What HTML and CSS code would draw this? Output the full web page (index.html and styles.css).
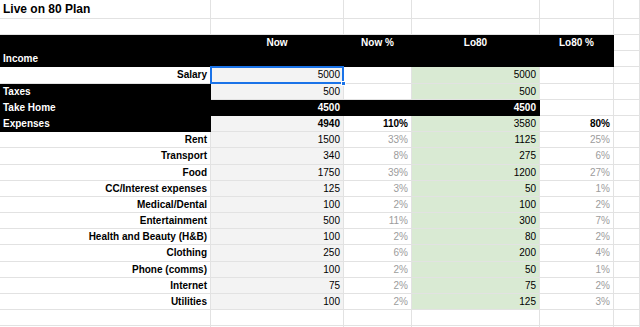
FILE: index.html
```html
<!DOCTYPE html>
<html>
<head>
<meta charset="utf-8">
<link rel="stylesheet" href="styles.css">
</head>
<body>
<div class="sheet">
  <div class="c title">Live on 80 Plan</div><div class="c"></div><div class="c"></div><div class="c"></div><div class="c"></div><div class="c"></div>
  <div class="c"></div><div class="c"></div><div class="c"></div><div class="c"></div><div class="c"></div><div class="c"></div>

  <div class="c blk"></div><div class="c blk ctr">Now</div><div class="c blk ctr">Now %</div><div class="c blk ctr">Lo80</div><div class="c blk ctr">Lo80 %</div><div class="c"></div>
  <div class="c blk">Income</div><div class="c blk"></div><div class="c blk"></div><div class="c blk"></div><div class="c blk"></div><div class="c"></div>

  <div class="c lbl">Salary</div><div class="c g num sel">5000</div><div class="c"></div><div class="c gr num">5000</div><div class="c"></div><div class="c"></div>
  <div class="c blk">Taxes</div><div class="c g num">500</div><div class="c"></div><div class="c gr num">500</div><div class="c"></div><div class="c"></div>
  <div class="c blk">Take Home</div><div class="c blk num">4500</div><div class="c blk"></div><div class="c blk num">4500</div><div class="c"></div><div class="c"></div>
  <div class="c blk">Expenses</div><div class="c g num b">4940</div><div class="c num b">110%</div><div class="c gr num">3580</div><div class="c num b">80%</div><div class="c"></div>

  <div class="c lbl">Rent</div><div class="c g num">1500</div><div class="c num pct">33%</div><div class="c gr num">1125</div><div class="c num pct">25%</div><div class="c"></div>
  <div class="c lbl">Transport</div><div class="c g num">340</div><div class="c num pct">8%</div><div class="c gr num">275</div><div class="c num pct">6%</div><div class="c"></div>
  <div class="c lbl">Food</div><div class="c g num">1750</div><div class="c num pct">39%</div><div class="c gr num">1200</div><div class="c num pct">27%</div><div class="c"></div>
  <div class="c lbl">CC/Interest expenses</div><div class="c g num">125</div><div class="c num pct">3%</div><div class="c gr num">50</div><div class="c num pct">1%</div><div class="c"></div>
  <div class="c lbl">Medical/Dental</div><div class="c g num">100</div><div class="c num pct">2%</div><div class="c gr num">100</div><div class="c num pct">2%</div><div class="c"></div>
  <div class="c lbl">Entertainment</div><div class="c g num">500</div><div class="c num pct">11%</div><div class="c gr num">300</div><div class="c num pct">7%</div><div class="c"></div>
  <div class="c lbl">Health and Beauty (H&amp;B)</div><div class="c g num">100</div><div class="c num pct">2%</div><div class="c gr num">80</div><div class="c num pct">2%</div><div class="c"></div>
  <div class="c lbl">Clothing</div><div class="c g num">250</div><div class="c num pct">6%</div><div class="c gr num">200</div><div class="c num pct">4%</div><div class="c"></div>
  <div class="c lbl">Phone (comms)</div><div class="c g num">100</div><div class="c num pct">2%</div><div class="c gr num">50</div><div class="c num pct">1%</div><div class="c"></div>
  <div class="c lbl">Internet</div><div class="c g num">75</div><div class="c num pct">2%</div><div class="c gr num">75</div><div class="c num pct">2%</div><div class="c"></div>
  <div class="c lbl">Utilities</div><div class="c g num">100</div><div class="c num pct">2%</div><div class="c gr num">125</div><div class="c num pct">3%</div><div class="c"></div>

  <div class="c"></div><div class="c"></div><div class="c"></div><div class="c"></div><div class="c"></div><div class="c"></div>
  <div class="c"></div><div class="c"></div><div class="c"></div><div class="c"></div><div class="c"></div><div class="c"></div>
</div>
</body>
</html>
```

FILE: styles.css
```css
html, body {
  margin: 0;
  padding: 0;
  background: #ffffff;
  overflow: hidden;
}

.sheet {
  display: grid;
  grid-template-columns: 211px 133px 68px 128px 74px 1fr;
  grid-template-rows: 19px 16px;
  grid-auto-rows: 16.2px;
  width: 640px;
  height: 327px;
  overflow: hidden;
  font-family: "Liberation Sans", Arial, Helvetica, sans-serif;
  font-size: 10px;
  color: #000000;
}

.c {
  box-sizing: border-box;
  border-right: 1px solid #e2e2e2;
  border-bottom: 1px solid #e2e2e2;
  padding: 0 3px;
  line-height: 15px;
  white-space: nowrap;
  overflow: visible;
}

.title {
  font-size: 12px;
  font-weight: bold;
  line-height: 18px;
}

.blk {
  background: #000000;
  color: #ffffff;
  font-weight: bold;
  border-color: #000000;
}

.g {
  background: #f3f3f3;
}

.gr {
  background: #d9ead3;
}

.ctr {
  text-align: center;
}

.num {
  text-align: right;
}

.lbl {
  text-align: right;
  font-weight: bold;
}

.b {
  font-weight: bold;
}

.pct {
  color: #9c9c9c;
}

.sel {
  position: relative;
}

.sel::after {
  content: "";
  position: absolute;
  left: -1px;
  top: -1px;
  right: -1px;
  bottom: -1px;
  border: 2px solid #1a73e8;
  pointer-events: none;
}

.sel::before {
  content: "";
  position: absolute;
  right: -3px;
  bottom: -3px;
  width: 5px;
  height: 5px;
  background: #1a73e8;
  border: 1px solid #ffffff;
  box-sizing: border-box;
  z-index: 1;
}
```
